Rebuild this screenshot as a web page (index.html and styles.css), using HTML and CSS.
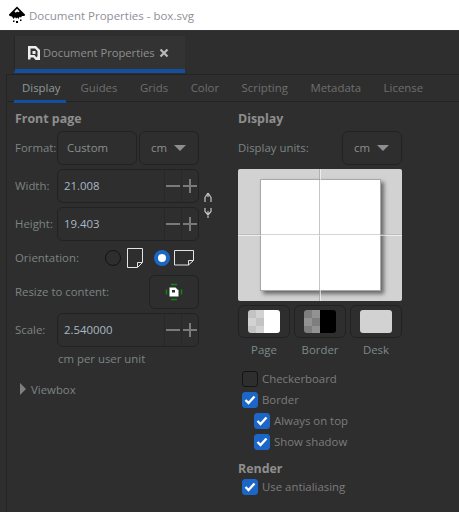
FILE: index.html
```html
<!DOCTYPE html>
<html lang="en">
<head>
<meta charset="utf-8">
<title>Document Properties - box.svg</title>
<link rel="stylesheet" href="styles.css">
</head>
<body>
<header class="titlebar">
  <svg class="app-logo" width="18" height="18" viewBox="0 0 18 18">
    <path d="M9 .5 L17 8.500 C17.500 9.800 15.500 10.400 14 10 L13 11.500 L11.500 10.800 L10.500 13 L9.500 11.500 L8 12.500 L7 11 L5.500 13 L4 10.500 C2.500 10.500 .5 9.800 1 8.500 Z" fill="#000"/>
    <path d="M9 2.800 L11.600 5.400 L10.200 6.200 L9.200 5.400 L7.800 6.800 L6.400 5.400 Z" fill="#fff"/>
    <path d="M5 14.500h1.500v1.500H5zM8 15h2v2H8zM12 13.500h1.500V15H12z" fill="#000"/>
  </svg>
  <span class="title-text">Document Properties - box.svg</span>
</header>

<div class="window">
  <div class="dock-bar">
    <div class="dock-tab">
      <svg class="tab-icon" width="14" height="16" viewBox="0 0 14 16">
        <path d="M1 1h8l4 4v10H8.500L6.500 12.500H3.500V14.500H1z" fill="#eee"/>
        <path d="M3.500 3.500h4.500l2.500 2.500v5l-1 1.500-2-2.500H3.500z" fill="#333"/>
        <path d="M5.500 6h3v3h-3z" fill="#eee"/>
      </svg>
      <span class="tab-label">Document Properties</span>
      <svg class="tab-close" width="10" height="10" viewBox="0 0 10 10"><path d="M1.500 1.500l7 7M8.500 1.500l-7 7" stroke="#b9b9b9" stroke-width="2.200"/></svg>
    </div>
  </div>

  <div class="notebook">
    <nav class="page-tabs">
      <span class="page-tab active">Display</span>
      <span class="page-tab">Guides</span>
      <span class="page-tab">Grids</span>
      <span class="page-tab">Color</span>
      <span class="page-tab">Scripting</span>
      <span class="page-tab">Metadata</span>
      <span class="page-tab">License</span>
    </nav>

    <div class="columns">
      <section class="col-left">
        <h2 class="heading">Front page</h2>
        <div class="row">
          <label class="row-label">Format:</label>
          <div class="control combo-format"><span class="lift">Custom</span></div>
          <div class="control combo-unit"><span class="lift">cm</span><span class="caret"></span></div>
        </div>
        <div class="size-group">
          <div class="size-rows">
            <div class="row">
              <label class="row-label">Width:</label>
              <div class="control spin"><span class="spin-value">21.008</span><span class="spin-btn"><span class="minus"></span></span><span class="spin-btn"><span class="plus"></span></span></div>
            </div>
            <div class="row">
              <label class="row-label">Height:</label>
              <div class="control spin"><span class="spin-value">19.403</span><span class="spin-btn"><span class="minus"></span></span><span class="spin-btn"><span class="plus"></span></span></div>
            </div>
          </div>
          <svg class="link-icon" width="10" height="28" viewBox="0 0 10 28">
            <path d="M5 1L2 5.500V10M5 1L8 5.500V10M5 1V5" fill="none" stroke="#c4c4c4" stroke-width="1.200"/>
            <path d="M2 16v3.500L5 23l3-3.500V16M5 19v7" fill="none" stroke="#c4c4c4" stroke-width="1.200"/>
          </svg>
        </div>
        <div class="orient-row">
          <span class="row-label orient-label">Orientation:</span>
          <span class="radio"></span>
          <svg class="orient-icon" width="16" height="20" viewBox="0 0 16 20">
            <path d="M.5.500h15v14l-5 5H.500z" fill="#2e2e2e" stroke="#e4e4e4"/>
            <path d="M15 14.500h-4.500V19" fill="none" stroke="#e4e4e4"/>
          </svg>
          <span class="radio on"></span>
          <svg class="orient-icon wide" width="20" height="16" viewBox="0 0 20 16">
            <path d="M.5.500h19v10l-5 4.500H.500z" fill="#2e2e2e" stroke="#e4e4e4"/>
            <path d="M19 10.500h-4.500V15" fill="none" stroke="#e4e4e4"/>
          </svg>
        </div>
        <div class="row resize-row">
          <span class="row-label">Resize to content:</span>
          <div class="control resize-btn">
            <svg width="18" height="18" viewBox="0 0 18 18">
              <path d="M6 1.500h6M6 16.500h6" stroke="#0a8a0a" stroke-width="1.500"/>
              <path d="M1.500 6.500v5M16.500 6.500v5" stroke="#0a8a0a" stroke-width="1.500"/>
              <path d="M4.500 4.500h6l3 3v6h-9z" fill="#fff"/>
              <path d="M7 7h3v2.500H7z" fill="#333"/>
            </svg>
          </div>
        </div>
        <div class="row">
          <label class="row-label">Scale:</label>
          <div class="control spin"><span class="spin-value">2.540000</span><span class="spin-btn"><span class="minus"></span></span><span class="spin-btn"><span class="plus"></span></span></div>
        </div>
        <p class="hint">cm per user unit</p>
        <div class="expander"><span class="arrow"></span>Viewbox</div>
      </section>

      <section class="col-right">
        <h2 class="heading">Display</h2>
        <div class="row units-row">
          <span class="row-label">Display units:</span>
          <div class="control combo-unit"><span class="lift">cm</span><span class="caret"></span></div>
        </div>
        <div class="preview">
          <div class="sheet"></div>
          <span class="guide-v"></span>
          <span class="guide-h"></span>
        </div>
        <div class="swatches">
          <div class="swatch-col"><div class="control swatch"><span class="chip chip-page"></span></div><span class="swatch-label">Page</span></div>
          <div class="swatch-col"><div class="control swatch"><span class="chip chip-border"></span></div><span class="swatch-label">Border</span></div>
          <div class="swatch-col"><div class="control swatch"><span class="chip chip-desk"></span></div><span class="swatch-label">Desk</span></div>
        </div>
        <div class="checks">
          <div class="check"><span class="box"></span>Checkerboard</div>
          <div class="check"><span class="box on"><svg width="12" height="10" viewBox="0 0 12 10"><path d="M1.500 5l3 3 6-6.500" fill="none" stroke="#fff" stroke-width="2.400"/></svg></span>Border</div>
          <div class="check sub"><span class="box on"><svg width="12" height="10" viewBox="0 0 12 10"><path d="M1.500 5l3 3 6-6.500" fill="none" stroke="#fff" stroke-width="2.400"/></svg></span>Always on top</div>
          <div class="check sub"><span class="box on"><svg width="12" height="10" viewBox="0 0 12 10"><path d="M1.500 5l3 3 6-6.500" fill="none" stroke="#fff" stroke-width="2.400"/></svg></span>Show shadow</div>
        </div>
        <h2 class="heading render">Render</h2>
        <div class="check"><span class="box on"><svg width="12" height="10" viewBox="0 0 12 10"><path d="M1.500 5l3 3 6-6.500" fill="none" stroke="#fff" stroke-width="2.400"/></svg></span>Use antialiasing</div>
      </section>
    </div>
  </div>
</div>
</body>
</html>
```

FILE: styles.css
```css
* { box-sizing: border-box; }
html, body { height: 100%; }
body {
  margin: 0;
  background: #2e2e2e;
  font-family: "Open Sans", "Noto Sans", sans-serif;
  font-size: 11.4px;
  color: #8e8e8e;
  overflow: hidden;
  display: flex;
  flex-direction: column;
}
.titlebar {
  height: 30px;
  flex: none;
  background: #fff;
  display: flex;
  align-items: center;
  padding-left: 8px;
  gap: 3px;
}
.title-text { color: #8f8f9a; font-size: 11.5px; }
.window {
  flex: 1;
  background: #2e2e2e;
  display: flex;
  flex-direction: column;
  min-height: 0;
}
.dock-bar {
  height: 42px;
  flex: none;
  padding: 5px 0 0 14px;
  border-top: 1px solid #353535;
  display: flex;
}
.dock-tab {
  width: 171px;
  height: 37px;
  background: #333;
  border-left: 1px solid #262626;
  border-bottom: 4px solid #134f9e;
  display: flex;
  align-items: center;
  padding-left: 12px;
}
.tab-icon { margin-right: 2px; }
.tab-label { color: #8f8f8f; font-size: 11.2px; }
.tab-close { margin-left: 4px; }
.notebook {
  flex: 1;
  margin: 2px 0 0 6px;
  border-top: 1px solid #242424;
  border-left: 1px solid #242424;
  display: flex;
  flex-direction: column;
  min-height: 0;
}
.page-tabs {
  height: 27px;
  flex: none;
  display: flex;
  border-bottom: 1px solid #242424;
  padding-left: 7px;
  gap: 6.500px;
}
.page-tab {
  padding: 5px 8px 0;
  height: 28px;
  color: #6f6f6f;
  white-space: nowrap;
}
.page-tab.active { width: 52px; color: #8e9a9a; border-bottom: 3px solid #134f9e; }
.columns {
  flex: 1;
  display: flex;
  padding-left: 8px;
}
.col-left { width: 223px; flex: none; padding-right: 39px; }
.col-right { width: 164px; flex: none; }
.heading {
  margin: 0;
  height: 29px;
  padding-top: 8px;
  font-size: 12.4px;
  line-height: 18px;
  font-weight: 700;
  color: #8e8e8e;
}
.row {
  display: flex;
  align-items: center;
  height: 34px;
  margin-bottom: 4px;
}
.row-label { width: 42px; flex: none; color: #7c8484; padding-bottom: 2px; }
.lift { padding-bottom: 2px; }
.control {
  height: 34px;
  border: 1px solid #222;
  border-radius: 6px;
  background: #2e2e2e;
  display: flex;
  align-items: center;
}
.combo-format { width: 80px; padding-left: 9px; color: #87908f; }
.combo-unit {
  width: 60px;
  margin-left: 2px;
  padding-left: 11px;
  color: #8e8e8e;
  gap: 7px;
}
.caret {
  width: 0;
  height: 0;
  border-left: 6px solid transparent;
  border-right: 6px solid transparent;
  border-top: 6px solid #8e8e8e;
}
.size-group { display: flex; }
.size-rows { width: 184px; flex: none; }
.link-icon { margin: 23px 0 0 4px; flex: none; }
.spin { width: 142px; padding-left: 6px; }
.spin-value { flex: 1; color: #a8b8c4; padding-bottom: 2px; }
.spin-btn {
  width: 17px;
  height: 32px;
  border-left: 1px solid #282828;
  display: flex;
  align-items: center;
  justify-content: center;
  position: relative;
}
.minus { width: 14px; height: 2px; background: #7a7a7a; }
.plus { width: 14px; height: 14px; position: relative; display: block; }
.plus::before, .plus::after { content: ""; position: absolute; background: #7a7a7a; }
.plus::before { left: 0; right: 0; top: 6px; height: 2px; }
.plus::after { top: 0; bottom: 0; left: 6px; width: 2px; }
.orient-row {
  display: flex;
  align-items: center;
  height: 26px;
  margin-bottom: 4px;
}
.orient-label { width: 90px; }
.radio {
  width: 16px;
  height: 16px;
  border-radius: 50%;
  border: 1px solid #141414;
  background: #2e2e2e;
  flex: none;
  position: relative;
}
.radio.on { background: #fff; border: 4px solid #1c66c8; }
.orient-icon { margin-left: 6px; flex: none; }
.orient-icon.wide { margin-left: 4px; }
.orient-icon + .radio { margin-left: 11px; }
.resize-row { justify-content: space-between; }
.resize-row .row-label { width: auto; }
.resize-btn { width: 50px; justify-content: center; }
.hint { margin: 0; padding: 0 0 0 43px; height: 25px; color: #7c8484; line-height: 16px; }
.expander { display: flex; align-items: center; height: 26px; padding: 0 0 0 5px; color: #7c8484; }
.arrow {
  width: 0;
  height: 0;
  border-top: 6px solid transparent;
  border-bottom: 6px solid transparent;
  border-left: 6px solid #808080;
  margin-right: 5px;
}
.units-row .row-label { width: 102px; }
.units-row .combo-unit { margin-left: 2px; }
.preview {
  width: 164px;
  height: 132px;
  background: #d2d2d2;
  border-radius: 2px;
  display: flex;
  align-items: center;
  justify-content: center;
  position: relative;
  padding-left: 1px;
}
.sheet {
  width: 119px;
  height: 110px;
  background: #fff;
  box-shadow: 0 0 0 1px #a8a8a8, 3px 3px 4px 1px #6a6a6a;
}
.guide-v { position: absolute; left: 81px; top: 0; bottom: 0; width: 2px; background: linear-gradient(90deg, rgba(150,150,150,.55) 50%, rgba(255,255,255,.6) 50%); }
.guide-h { position: absolute; top: 65px; left: 0; right: 0; height: 2px; background: linear-gradient(rgba(170,170,170,.5) 50%, rgba(255,255,255,.6) 50%); }
.swatches { display: flex; gap: 4px; margin-top: 4px; }
.swatch-col { width: 52px; display: flex; flex-direction: column; align-items: center; }
.swatch { width: 52px; height: 33px; justify-content: center; }
.swatch-label { margin-top: 3px; height: 25px; color: #7c8a8a; line-height: 17px; }
.chip { display: block; width: 32px; height: 23px; border-radius: 3px; }
.chip-page { background: linear-gradient(90deg, transparent 50%, #fff 50%), repeating-conic-gradient(#d2d2d2 0 25%, #c3c3c3 0 50%) 0 0 / 16px 16px; }
.chip-border { background: linear-gradient(90deg, transparent 50%, #000 50%), repeating-conic-gradient(#929292 0 25%, #7e7e7e 0 50%) 0 0 / 16px 16px; }
.chip-desk { background: #d2d2d2; }
.checks { margin-top: 2px; }
.check {
  display: flex;
  align-items: center;
  height: 21px;
  padding-left: 4px;
  gap: 4px;
  color: #7c7c7c;
}
.check.sub { padding-left: 16px; }
.box {
  width: 16px;
  height: 16px;
  flex: none;
  border: 1px solid #141414;
  border-radius: 3px;
  display: flex;
  align-items: center;
  justify-content: center;
}
.box.on { background: #1c66c8; border-color: #1c66c8; }
.heading.render { height: 24px; padding-top: 8px; }
```
